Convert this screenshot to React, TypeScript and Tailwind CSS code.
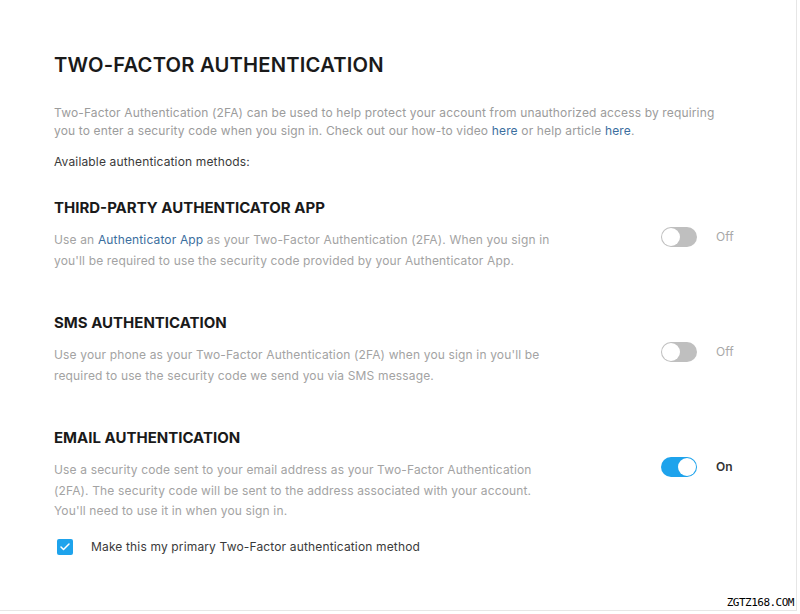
import { Check } from "lucide-react";

type Method = {
  title: string;
  lines: React.ReactNode[];
  on: boolean;
};

function Toggle({ on }: { on: boolean }) {
  return (
    <div className="flex items-center gap-[19px] -mt-[3px]">
      <div
        className={`relative w-[36px] h-[20px] rounded-full ${
          on ? "bg-[#1ea3ec]" : "bg-[#bfbfbf]"
        }`}
      >
        <div
          className={`absolute top-[1px] w-[18px] h-[18px] rounded-full bg-white ${
            on ? "right-[1px]" : "left-[1px]"
          }`}
        />
      </div>
      <span
        className={`text-[12px] ${on ? "text-[#333] font-semibold" : "text-[#a8a8a8]"}`}
      >
        {on ? "On" : "Off"}
      </span>
    </div>
  );
}

export default function App() {
  const link = "text-[#3b6e9e]";
  const methods: Method[] = [
    {
      title: "THIRD-PARTY AUTHENTICATOR APP",
      lines: [
        <>
          Use an <span className={link}>Authenticator App</span> as your Two-Factor Authentication (2FA). When you sign in
        </>,
        "you'll be required to use the security code provided by your Authenticator App.",
      ],
      on: false,
    },
    {
      title: "SMS AUTHENTICATION",
      lines: [
        "Use your phone as your Two-Factor Authentication (2FA) when you sign in you'll be",
        "required to use the security code we send you via SMS message.",
      ],
      on: false,
    },
    {
      title: "EMAIL AUTHENTICATION",
      lines: [
        "Use a security code sent to your email address as your Two-Factor Authentication",
        "(2FA). The security code will be sent to the address associated with your account.",
        "You'll need to use it in when you sign in.",
      ],
      on: true,
    },
  ];

  return (
    <div className="relative w-[797px] h-[611px] bg-white border-r border-b border-[#e6e6e6] font-['Inter',sans-serif] overflow-hidden">
      <div className="pt-[51px] pl-[54px]">
        <h1 className="text-[20.2px] leading-[28px] font-semibold text-[#1a1a1a] tracking-[0.2px]">
          TWO-FACTOR AUTHENTICATION
        </h1>
        <p className="mt-[25px] text-[12px] leading-[18px] text-[#9c9c9c] whitespace-nowrap tracking-[0.15px]">
          Two-Factor Authentication (2FA) can be used to help protect your account from unauthorized access by requiring
          <br />
          you to enter a security code when you sign in. Check out our how-to video <span className={link}>here</span> or help article <span className={link}>here</span>.
        </p>
        <p className="mt-[13px] text-[12px] leading-[18px] text-[#3a3a3a] tracking-[0.15px]">
          Available authentication methods:
        </p>

        {methods.map((m, i) => (
          <div key={i} className={i === 0 ? "mt-[26px]" : "mt-[41px]"}>
            <h2 className="text-[15px] leading-[22px] font-bold text-[#1a1a1a]">{m.title}</h2>
            <div className="mt-[11px] flex items-start">
              <div className="w-[607px]">
                <p className="text-[12px] leading-[20.5px] text-[#a3a3a3] whitespace-nowrap tracking-[0.15px]">
                  {m.lines.map((l, j) => (
                    <span key={j} className="block">
                      {l}
                    </span>
                  ))}
                </p>
              </div>
              <Toggle on={m.on} />
            </div>
          </div>
        ))}

        <label className="mt-[16px] flex items-center gap-[18px] pl-[3px]">
          <span className="w-[16px] h-[16px] rounded-[2px] bg-[#1ea3ec] flex items-center justify-center">
            <Check className="w-[12px] h-[12px] text-white" strokeWidth={3} />
          </span>
          <span className="text-[12px] leading-[18px] text-[#3a3a3a] tracking-[0.15px]">
            Make this my primary Two-Factor authentication method
          </span>
        </label>
      </div>

      <span className="absolute right-[2px] bottom-[1px] text-[11px] leading-[12px] text-black font-['DejaVu_Sans_Mono',monospace] tracking-[-0.5px]">
        ZGTZ168.COM
      </span>
    </div>
  );
}
